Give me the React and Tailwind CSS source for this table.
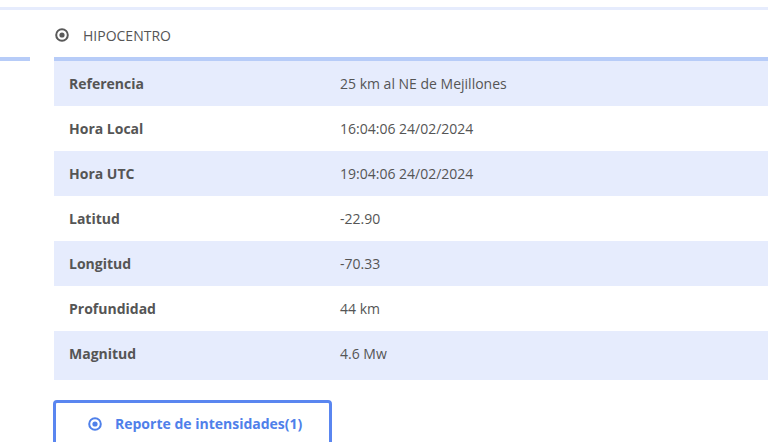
import React from 'react';

const rows = [
  { label: 'Referencia', value: '25 km al NE de Mejillones' },
  { label: 'Hora Local', value: '16:04:06 24/02/2024' },
  { label: 'Hora UTC', value: '19:04:06 24/02/2024' },
  { label: 'Latitud', value: '-22.90' },
  { label: 'Longitud', value: '-70.33' },
  { label: 'Profundidad', value: '44 km' },
  { label: 'Magnitud', value: '4.6 Mw' },
];

const TargetIcon = ({ color }) => (
  <svg width="14" height="14" viewBox="0 0 14 14" fill="none">
    <circle cx="7" cy="7" r="5.8" stroke={color} strokeWidth="2" />
    <circle cx="7" cy="7" r="2.6" fill={color} />
  </svg>
);

const App = () => {
  return (
    <div
      className="w-[782px] h-[442px] overflow-hidden bg-white text-[#555555]"
      style={{ fontFamily: '"Open Sans", "Noto Sans", sans-serif' }}
    >
      <div className="h-[7px]" />
      <div className="h-[3px] w-[768px] bg-[#e6ecfd]" />

      <div className="flex">
        {/* left side column stub */}
        <div className="w-[30px] pt-[47px]">
          <div className="h-[4px] bg-[#b7ccf8]" />
        </div>

        <div className="ml-[24px] w-[714px]">
          <div className="h-[47px] flex items-center pl-[1px] pt-[3px]">
            <TargetIcon color="#595959" />
            <span className="ml-[14px] text-[14px] text-[#555555]">HIPOCENTRO</span>
          </div>

          <div className="border-t-[4px] border-[#b7ccf8]">
            {rows.map((r, i) => (
              <div
                key={r.label}
                className={`flex items-start text-[14px] ${i % 2 === 0 ? 'bg-[#e6ecfd]' : 'bg-white'} ${
                  i === rows.length - 1 ? 'h-[49px]' : 'h-[45px]'
                }`}
              >
                <div className="w-[286px] pl-[15px] pt-[12px] font-bold text-[#555555]">{r.label}</div>
                <div className="pt-[12px] text-[#555555]">{r.value}</div>
              </div>
            ))}
          </div>

          <div className="mt-[20px] -ml-[1px] w-[279px] h-[60px] border-[3px] border-[#5a86f0] rounded-[4px] flex items-start pt-[10px] pl-[32px]">
            <span className="mt-[4px]">
              <TargetIcon color="#4f80ea" />
            </span>
            <span className="ml-[13px] text-[14px] font-bold text-[#4f80ea]">Reporte de intensidades(1)</span>
          </div>
        </div>
      </div>
    </div>
  );
};

export default App;
